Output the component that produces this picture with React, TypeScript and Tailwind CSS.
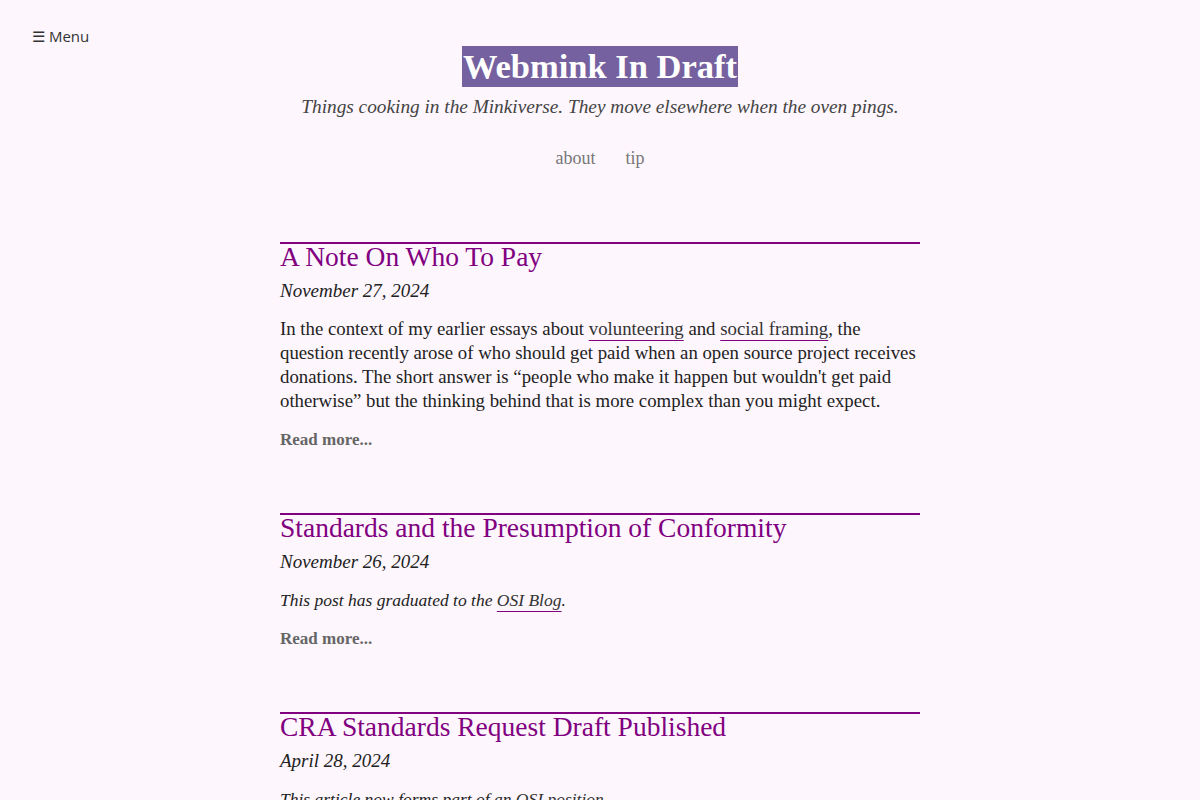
const serif = "font-['Liberation_Serif','DejaVu_Serif',serif]";

interface Post {
  title: string;
  date: string;
  body: React.ReactNode;
  italic?: boolean;
}

const linkCls = 'text-[#333] underline decoration-[#800080] decoration-1 underline-offset-[5px]';

const POSTS: Post[] = [
  {
    title: 'A Note On Who To Pay',
    date: 'November 27, 2024',
    body: (
      <>
        In the context of my earlier essays about <a className={linkCls}>volunteering</a> and{' '}
        <a className={linkCls}>social framing</a>, the question recently arose of who should get paid when an open
        source project receives donations. The short answer is “people who make it happen but wouldn't get paid
        otherwise” but the thinking behind that is more complex than you might expect.
      </>
    ),
  },
  {
    title: 'Standards and the Presumption of Conformity',
    date: 'November 26, 2024',
    italic: true,
    body: (
      <>
        This post has graduated to the <a className={linkCls}>OSI Blog</a>.
      </>
    ),
  },
  {
    title: 'CRA Standards Request Draft Published',
    date: 'April 28, 2024',
    italic: true,
    body: (
      <>
        This article now forms part of an <a className={linkCls}>OSI position</a>.
      </>
    ),
  },
];

const PostSummary = ({ post }: { post: Post }) => (
  <article className="mb-[61px] border-t-2 border-[#800080]">
    <h2 className="-mt-[1px] text-[27.5px] leading-[28px] text-[#800080]">{post.title}</h2>
    <p className="mt-[5px] text-[19px] leading-[30px] italic text-[#222]">{post.date}</p>
    <p
      className={`mt-[11px] leading-[24px] text-[#222] ${post.italic ? 'text-[17.5px] italic' : 'text-[18.8px]'}`}
    >
      {post.body}
    </p>
    <p className="mt-[15px] text-[17px] font-bold leading-[24px] text-[#666]">Read more...</p>
  </article>
);

export default function App() {
  return (
    <div className={`min-h-screen bg-[#fdf6fd] ${serif}`}>
      <div className="px-[32px] pt-[25px]">
        <button className="font-['Open_Sans','Noto_Sans',sans-serif] text-[15px] leading-[20px] text-[#333]">
          ☰ Menu
        </button>
      </div>

      <header className="-mt-[3px] flex flex-col items-center">
        <h1 className="bg-[#7561a0] px-[1px] text-[34.5px] font-bold leading-[41px] text-white">Webmink In Draft</h1>
        <p className="mt-[8px] text-[19.3px] italic leading-[24px] text-[#444]">
          Things cooking in the Minkiverse. They move elsewhere when the oven pings.
        </p>
        <nav className="mt-[27px] flex gap-[30px] text-[18px] leading-[24px] text-[#777]">
          <a>about</a>
          <a>tip</a>
        </nav>
      </header>

      <main className="mx-auto mt-[72px] w-[640px]">
        {POSTS.map((post) => (
          <PostSummary key={post.title} post={post} />
        ))}
      </main>
    </div>
  );
}
